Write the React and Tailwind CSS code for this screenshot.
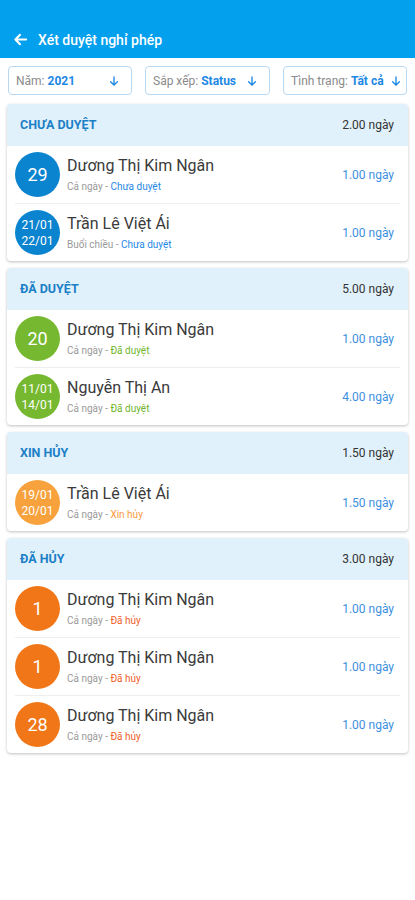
import React from 'react';

const sections = [
  {
    title: 'CHƯA DUYỆT',
    total: '2.00 ngày',
    circle: 'bg-[#0b84d0]',
    status: 'text-[#1e88e5]',
    items: [
      { day: '29', name: 'Dương Thị Kim Ngân', type: 'Cả ngày', label: 'Chưa duyệt', amount: '1.00 ngày' },
      { from: '21/01', to: '22/01', name: 'Trần Lê Việt Ái', type: 'Buổi chiều', label: 'Chưa duyệt', amount: '1.00 ngày' },
    ],
  },
  {
    title: 'ĐÃ DUYỆT',
    total: '5.00 ngày',
    circle: 'bg-[#76b82f]',
    status: 'text-[#6fb52c]',
    items: [
      { day: '20', name: 'Dương Thị Kim Ngân', type: 'Cả ngày', label: 'Đã duyệt', amount: '1.00 ngày' },
      { from: '11/01', to: '14/01', name: 'Nguyễn Thị An', type: 'Cả ngày', label: 'Đã duyệt', amount: '4.00 ngày' },
    ],
  },
  {
    title: 'XIN HỦY',
    total: '1.50 ngày',
    circle: 'bg-[#f7a23c]',
    status: 'text-[#f79a3a]',
    items: [
      { from: '19/01', to: '20/01', name: 'Trần Lê Việt Ái', type: 'Cả ngày', label: 'Xin hủy', amount: '1.50 ngày' },
    ],
  },
  {
    title: 'ĐÃ HỦY',
    total: '3.00 ngày',
    circle: 'bg-[#f07618]',
    status: 'text-[#f0602a]',
    items: [
      { day: '1', name: 'Dương Thị Kim Ngân', type: 'Cả ngày', label: 'Đã hủy', amount: '1.00 ngày' },
      { day: '1', name: 'Dương Thị Kim Ngân', type: 'Cả ngày', label: 'Đã hủy', amount: '1.00 ngày' },
      { day: '28', name: 'Dương Thị Kim Ngân', type: 'Cả ngày', label: 'Đã hủy', amount: '1.00 ngày' },
    ],
  },
];

const ArrowDown = ({ className }) => (
  <svg viewBox="0 0 16 16" className={className} fill="none" stroke="currentColor" strokeWidth="1.8" strokeLinecap="round" strokeLinejoin="round">
    <path d="M8 2.5v11M3.5 9l4.5 4.5L12.5 9" />
  </svg>
);

function Filter({ label, value, className }) {
  return (
    <div className={`flex h-[29px] items-center justify-between rounded-[4px] border border-[#b9d9f3] bg-white pl-[7px] ${className}`}>
      <span className="whitespace-nowrap text-[12px] text-[#8a8a8a]">
        {label} <span className="font-bold text-[#1e88e5]">{value}</span>
      </span>
      <ArrowDown className="h-[12px] w-[12px] shrink-0 text-[#1e88e5]" />
    </div>
  );
}

function Row({ item, circle, status }) {
  return (
    <div className="flex h-[57px] items-center pl-2 pr-[14px]">
      <div className={`flex h-[45px] w-[45px] shrink-0 items-center justify-center rounded-full text-white ${circle}`}>
        {item.day ? (
          <span className="text-[18px] leading-none">{item.day}</span>
        ) : (
          <span className="text-center text-[12px] leading-[16px]">
            {item.from}
            <br />
            {item.to}
          </span>
        )}
      </div>
      <div className="ml-[7px] flex-1">
        <div className="text-[16px] leading-[20px] text-[#3a3a3a]">{item.name}</div>
        <div className="mt-[3px] text-[10px] text-[#9a9a9a]">
          {item.type} - <span className={status}>{item.label}</span>
        </div>
      </div>
      <div className="text-[12px] text-[#3d8fe0]">{item.amount}</div>
    </div>
  );
}

export default function App() {
  return (
    <div className="min-h-[900px] bg-white font-['Roboto',sans-serif]">
      <div className="flex h-[58px] items-end bg-[#03a0ee] pb-[11px] pl-[13px]">
        <svg viewBox="0 0 16 16" className="h-[15px] w-[15px] text-white" fill="none" stroke="currentColor" strokeWidth="2.2" strokeLinecap="round" strokeLinejoin="round">
          <path d="M14 8H2.5M7.5 3L2.5 8l5 5" />
        </svg>
        <span className="ml-[10px] text-[14px] font-medium leading-none text-white">Xét duyệt nghỉ phép</span>
      </div>

      <div className="flex justify-between px-2 pt-2">
        <Filter label="Năm:" value="2021" className="w-[124px] pr-[11px]" />
        <Filter label="Sắp xếp:" value="Status" className="w-[125px] pr-[11px]" />
        <Filter label="Tình trạng:" value="Tất cả" className="w-[124px] gap-[2px] pr-[4px]" />
      </div>

      <div className="flex flex-col gap-[7px] px-[7px] pt-[9px]">
        {sections.map((s) => (
          <div key={s.title} className="overflow-hidden rounded-[4px] bg-white shadow-[0_1px_3px_rgba(0,0,0,0.25)]">
            <div className="flex h-[42px] items-center justify-between bg-[#e1f1fb] pl-[13px] pr-[14px]">
              <span className="text-[12.5px] font-bold text-[#1c80c6]">{s.title}</span>
              <span className="text-[12px] text-[#333333]">{s.total}</span>
            </div>
            {s.items.map((it, i) => (
              <React.Fragment key={i}>
                {i > 0 && <div className="mx-2 h-px bg-[#eeeeee]" />}
                <Row item={it} circle={s.circle} status={s.status} />
              </React.Fragment>
            ))}
          </div>
        ))}
      </div>
    </div>
  );
}
